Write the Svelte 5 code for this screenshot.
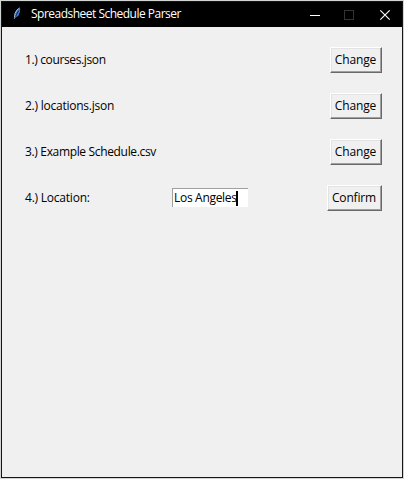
<script>
  const rows = [
    { label: '1.) courses.json', tracking: -0.37, action: 'Change' },
    { label: '2.) locations.json', tracking: -0.24, action: 'Change' },
    { label: '3.) Example Schedule.csv', tracking: -0.34, action: 'Change' },
    { label: '4.) Location:', tracking: -0.22, action: 'Confirm', value: 'Los Angeles' }
  ];
</script>

<div class="desktop">
  <div class="window">
    <header>
      <svg class="feather" width="10" height="14" viewBox="0 0 10 14">
        <path d="M1.7 11 L1.9 7.5 L3.5 4 L6 1.4 L7.2 1.2 L7 5 L5.5 8.5 L3.5 10 Z" fill="#3f78c8" />
        <path d="M1.6 10 L2 6.5 L4 3 L6.7 .9" fill="none" stroke="#a9cdf2" stroke-width="1" />
        <path d="M1.8 11.5 L3.5 7.5 L5.8 3.4" fill="none" stroke="#0b1a38" stroke-width=".9" />
        <path d="M1.3 11.8 L2.2 9.5" stroke="#c8c8c8" stroke-width=".8" />
      </svg>
      <span class="title">Spreadsheet Schedule Parser</span>
      <svg class="controls" width="90" height="24" viewBox="0 0 90 24" fill="none">
        <path d="M8 12.5h10" stroke="#fff" />
        <rect x="42.5" y="7.5" width="9" height="9" stroke="#333" />
        <path d="M78.3 7.3l9.4 9.4M87.7 7.3l-9.4 9.4" stroke="#fff" stroke-width="1.15" />
      </svg>
    </header>
    <main>
      {#each rows as row}
        <div class="row">
          <span class="label" style:letter-spacing="{row.tracking}px">{row.label}</span>
          {#if row.value}
            <div class="entry"><span>{row.value}</span><i class="caret"></i></div>
          {/if}
          <button class:confirm={row.value}>{row.action}</button>
        </div>
      {/each}
    </main>
  </div>
</div>

<style>
  .desktop {
    box-sizing: border-box;
    width: 404px;
    height: 479px;
    padding: 1px;
    background: #d2d5d4;
    font: 12px/16px "Open Sans", "Noto Sans", sans-serif;
    letter-spacing: -0.3px;
    color: #000;
    overflow: hidden;
  }
  .window {
    box-sizing: border-box;
    height: 477px;
    border: 1px solid #121619;
    background: #f0f0f0;
  }
  header {
    display: flex;
    align-items: center;
    height: 25px;
    padding-left: 11px;
    background: #000;
    color: #fff;
    white-space: nowrap;
  }
  .feather { margin: 0 8px 2px 0; flex: none; }
  .title { flex: 1; padding-bottom: 1px; letter-spacing: -0.51px; }
  .controls { flex: none; margin-right: 10px; }
  main {
    display: flex;
    flex-direction: column;
    gap: 20px;
    padding: 20px 20px 0 23px;
  }
  .row {
    display: flex;
    align-items: center;
    height: 26px;
    white-space: nowrap;
  }
  .label { width: 147px; }
  .entry {
    box-sizing: border-box;
    display: flex;
    align-items: center;
    width: 76px;
    height: 19px;
    margin-bottom: 1px;
    padding-left: 1px;
    background: #fff;
    border-top: 1px solid #a0a0a0;
    border-left: 1px solid #a0a0a0;
  }
  .entry span { width: 62px; }
  .caret { width: 2px; height: 15px; background: #000; }
  button {
    box-sizing: border-box;
    width: 52px;
    height: 26px;
    margin: 0 0 0 auto;
    padding: 0 1px 0 0;
    border: 1px solid;
    border-color: #fff #696969 #696969 #fff;
    box-shadow: inset -1px -1px #a0a0a0, inset 1px 1px #e3e3e3;
    background: #f0f0f0;
    color: #000;
    font: inherit;
    letter-spacing: -0.15px;
  }
  .confirm { width: 55px; }
</style>
